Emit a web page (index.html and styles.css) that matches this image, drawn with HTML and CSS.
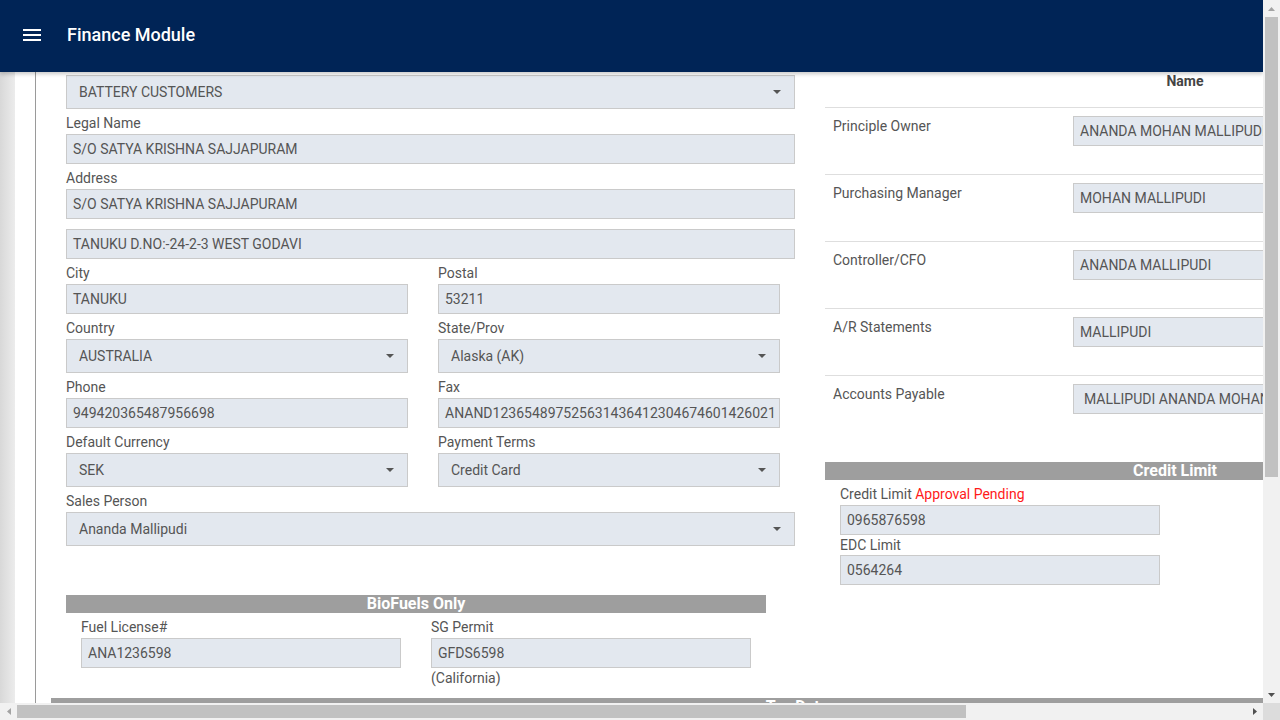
FILE: index.html
```html
<!DOCTYPE html>
<html lang="en">
<head>
<meta charset="utf-8">
<title>Finance Module</title>
<link rel="stylesheet" href="styles.css">
</head>
<body>
<div class="app">
  <div class="viewport">
    <header class="topbar">
      <svg class="menu" width="18" height="12" viewBox="0 0 18 12"><rect x="0" y="0" width="18" height="2" fill="#fff"/><rect x="0" y="5" width="18" height="2" fill="#fff"/><rect x="0" y="10" width="18" height="2" fill="#fff"/></svg>
      <h1 class="title">Finance Module</h1>
    </header>
    <div class="content">
      <div class="strip"></div>
      <div class="page">
        <div class="cols">
          <div class="left">
            <div class="select"><span>BATTERY CUSTOMERS</span><span class="caret"></span></div>
            <div class="label">Legal Name</div>
            <div class="input">S/O SATYA KRISHNA SAJJAPURAM</div>
            <div class="label">Address</div>
            <div class="input">S/O SATYA KRISHNA SAJJAPURAM</div>
            <div class="input">TANUKU D.NO:-24-2-3 WEST GODAVI</div>
            <div class="pair">
              <div class="field">
                <div class="label">City</div>
                <div class="input">TANUKU</div>
              </div>
              <div class="field">
                <div class="label">Postal</div>
                <div class="input">53211</div>
              </div>
            </div>
            <div class="pair">
              <div class="field">
                <div class="label">Country</div>
                <div class="select"><span>AUSTRALIA</span><span class="caret"></span></div>
              </div>
              <div class="field">
                <div class="label">State/Prov</div>
                <div class="select"><span>Alaska (AK)</span><span class="caret"></span></div>
              </div>
            </div>
            <div class="pair">
              <div class="field">
                <div class="label">Phone</div>
                <div class="input">949420365487956698</div>
              </div>
              <div class="field">
                <div class="label">Fax</div>
                <div class="input">ANAND123654897525631436412304674601426021</div>
              </div>
            </div>
            <div class="pair">
              <div class="field">
                <div class="label">Default Currency</div>
                <div class="select"><span>SEK</span><span class="caret"></span></div>
              </div>
              <div class="field">
                <div class="label">Payment Terms</div>
                <div class="select"><span>Credit Card</span><span class="caret"></span></div>
              </div>
            </div>
            <div class="label">Sales Person</div>
            <div class="select"><span>Ananda Mallipudi</span><span class="caret"></span></div>

            <div class="bio">
              <div class="bar">BioFuels Only</div>
              <div class="bio-grid">
                <div class="field">
                  <div class="label">Fuel License#</div>
                  <div class="input">ANA1236598</div>
                </div>
                <div class="field">
                  <div class="label">SG Permit</div>
                  <div class="input">GFDS6598</div>
                  <div class="note">(California)</div>
                </div>
              </div>
            </div>
          </div>

          <div class="right">
            <div class="table">
              <div class="thead"><div class="hc1"></div><div class="hc2">Name</div></div>
              <div class="trow"><div class="c1">Principle Owner</div><div class="c2"><div class="input">ANANDA MOHAN MALLIPUDI</div></div></div>
              <div class="trow"><div class="c1">Purchasing Manager</div><div class="c2"><div class="input">MOHAN MALLIPUDI</div></div></div>
              <div class="trow"><div class="c1">Controller/CFO</div><div class="c2"><div class="input">ANANDA MALLIPUDI</div></div></div>
              <div class="trow"><div class="c1">A/R Statements</div><div class="c2"><div class="input">MALLIPUDI</div></div></div>
              <div class="trow"><div class="c1">Accounts Payable</div><div class="c2"><div class="input pad">MALLIPUDI ANANDA MOHAN</div></div></div>
            </div>
            <div class="bar credit-bar">Credit Limit</div>
            <div class="credit">
              <div class="clabel">Credit Limit <span class="warn">Approval Pending</span></div>
              <div class="input">0965876598</div>
              <div class="clabel tight">EDC Limit</div>
              <div class="input">0564264</div>
            </div>
          </div>
        </div>
        <div class="bar taxbar">Tax Data</div>
      </div>
    </div>
  </div>

  <div class="vscroll">
    <div class="sbtn"><svg width="7" height="4" viewBox="0 0 7 4"><polygon points="0,4 3.5,0 7,4" fill="#a3a3a3"/></svg></div>
    <div class="vthumb"></div>
    <div class="fill"></div>
    <div class="sbtn"><svg width="7" height="4" viewBox="0 0 7 4"><polygon points="0,0 7,0 3.5,4" fill="#505050"/></svg></div>
  </div>
  <div class="hscroll">
    <div class="sbtn"><svg width="4" height="7" viewBox="0 0 4 7"><polygon points="4,0 4,7 0,3.5" fill="#a3a3a3"/></svg></div>
    <div class="hthumb"></div>
    <div class="fill"></div>
    <div class="sbtn"><svg width="4" height="7" viewBox="0 0 4 7"><polygon points="0,0 4,3.5 0,7" fill="#505050"/></svg></div>
  </div>
  <div class="corner"></div>
</div>
</body>
</html>
```

FILE: styles.css
```css
html, body {
  margin: 0;
  padding: 0;
}
body {
  overflow: hidden;
  background: #fff;
  font-family: Roboto, "Liberation Sans", sans-serif;
  font-size: 14px;
  color: #555;
}
.app {
  display: grid;
  grid-template-columns: 1263px 17px;
  grid-template-rows: 703px 17px;
  width: 1280px;
  height: 720px;
}
.viewport {
  display: flex;
  flex-direction: column;
  overflow: hidden;
  min-width: 0;
}
.topbar {
  flex: none;
  height: 72px;
  box-sizing: border-box;
  background: #002456;
  display: flex;
  align-items: center;
  padding: 0 0 4px 23px;
  position: relative;
  z-index: 2;
  box-shadow: 0 2px 4px rgba(0, 0, 0, 0.22);
}
.menu {
  flex: none;
  margin-top: 2px;
}
.title {
  margin: 0 0 0 26px;
  font-size: 18px;
  font-weight: 500;
  color: #fff;
}
.content {
  flex: 1;
  min-height: 0;
  display: flex;
  overflow: hidden;
}
.strip {
  flex: none;
  width: 15px;
  margin-right: 20px;
  background: linear-gradient(to right, #d8d8d8, #ececec);
}
.page {
  flex: none;
  border-left: 1px solid #9a9a9a;
  padding-left: 30px;
}
.cols {
  display: flex;
  gap: 30px;
  align-items: flex-start;
}
.left {
  flex: none;
  width: 729px;
  padding-top: 3px;
}
.right {
  flex: none;
  width: 700px;
}
.label {
  margin-top: 4px;
  margin-bottom: 1px;
  line-height: 20px;
  white-space: nowrap;
}
.input {
  box-sizing: border-box;
  height: 30px;
  line-height: 28px;
  border: 1px solid #cacaca;
  background: #e3e8ef;
  padding: 0 6px;
  white-space: nowrap;
  overflow: hidden;
}
.input.pad {
  padding-left: 10px;
}
.input + .input {
  margin-top: 10px;
}
.select {
  box-sizing: border-box;
  height: 34px;
  border: 1px solid #cacaca;
  background: #e3e8ef;
  padding: 0 13px 0 12px;
  display: flex;
  align-items: center;
  justify-content: space-between;
  white-space: nowrap;
}
.caret {
  width: 0;
  height: 0;
  border-left: 4px solid transparent;
  border-right: 4px solid transparent;
  border-top: 4px solid #555;
}
.pair {
  display: grid;
  grid-template-columns: 342px 342px;
  column-gap: 30px;
}
.bio {
  width: 700px;
  margin-top: 49px;
}
.bar {
  height: 18px;
  line-height: 18px;
  background: #9e9e9e;
  color: #fff;
  font-size: 16px;
  font-weight: 700;
  text-align: center;
  white-space: nowrap;
  overflow: hidden;
}
.bio-grid {
  display: grid;
  grid-template-columns: 320px 320px;
  column-gap: 30px;
  padding: 0 15px;
}
.note {
  line-height: 20px;
}
.thead {
  display: flex;
  height: 35px;
  line-height: 18px;
  font-weight: 700;
  color: #444;
}
.hc1 {
  width: 240px;
}
.hc2 {
  width: 240px;
  text-align: center;
}
.trow {
  display: flex;
  height: 66px;
  border-top: 1px solid #dedede;
}
.c1 {
  flex: none;
  width: 240px;
  box-sizing: border-box;
  padding: 8px 8px 0;
  line-height: 20px;
}
.c2 {
  flex: none;
  width: 240px;
  box-sizing: border-box;
  padding: 8px 8px 0;
}
.credit-bar {
  margin-top: 20px;
}
.credit {
  padding-left: 15px;
  width: 320px;
}
.clabel {
  margin-top: 4px;
  margin-bottom: 1px;
  line-height: 20px;
}
.clabel.tight {
  margin-top: 0;
  margin-bottom: 0;
}
.warn {
  color: #ff1a1a;
}
.taxbar {
  margin-top: 10px;
  margin-left: -15px;
  width: 1492px;
}
.vscroll {
  background: #f1f1f1;
  display: flex;
  flex-direction: column;
}
.hscroll {
  background: #f1f1f1;
  display: flex;
}
.sbtn {
  flex: none;
  width: 17px;
  height: 17px;
  display: flex;
  align-items: center;
  justify-content: center;
}
.sbtn svg {
  display: block;
}
.vthumb {
  flex: none;
  height: 460px;
  margin: 0 2px;
  background: #c1c1c1;
}
.hthumb {
  flex: none;
  width: 949px;
  margin: 2px 0;
  background: #c1c1c1;
}
.fill {
  flex: 1;
}
.corner {
  background: #dcdcdc;
}
```
